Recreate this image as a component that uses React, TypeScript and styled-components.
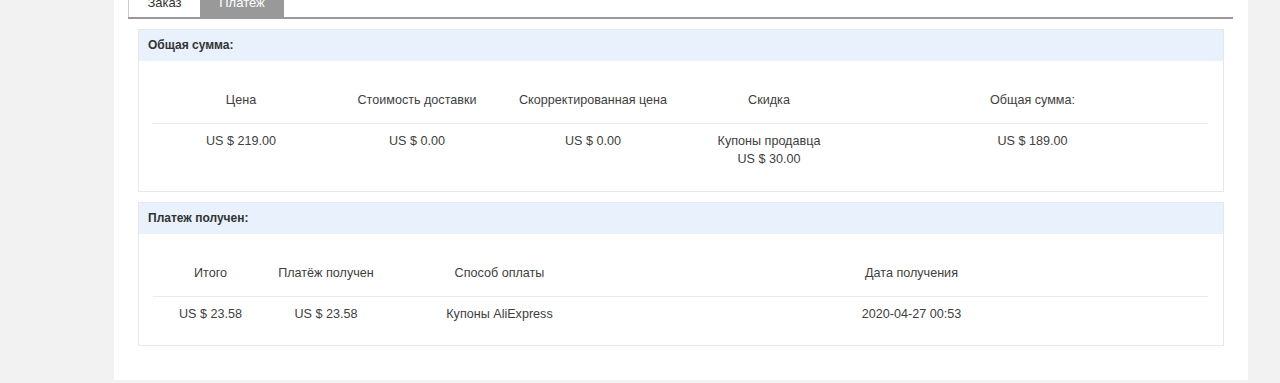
import React from "react";
import styled, { createGlobalStyle } from "styled-components";

const GlobalStyle = createGlobalStyle`
    html, body {
        margin: 0;
        padding: 0;
        background: #f2f2f2;
        font-family: "Liberation Sans", Arial, sans-serif;
        font-size: 12px;
        color: #333;
    }
`;

const Page = styled.div`
    padding-left: 114px;
    overflow: hidden;
    height: 383px;
`;

const Container = styled.div`
    width: 1134px;
    background: white;
    margin-top: -11px;
    padding: 0 15px 34px 14px;
    box-sizing: border-box;
`;

const TabBar = styled.div`
    display: flex;
    border-bottom: 2px solid #999;
`;

const Tab = styled.div<{ $active?: boolean }>`
    height: 28px;
    line-height: 28px;
    font-size: 13px;
    color: ${(p) => (p.$active ? "#fff" : "#333")};
    background: ${(p) => (p.$active ? "#999" : "#fff")};
    border-left: ${(p) => (p.$active ? "none" : "1px solid #ccc")};
    box-sizing: border-box;
    width: ${(p) => (p.$active ? "84px" : "72px")};
    text-align: center;
`;

const Content = styled.div`
    padding: 10px 9px 0 10px;
    display: flex;
    flex-direction: column;
    gap: 10px;
`;

const Section = styled.div`
    border: 1px solid #e4e8ee;
`;

const SectionHeader = styled.div`
    height: 31px;
    line-height: 31px;
    padding: 0 9px;
    background: #e8f1fc;
    font-weight: bold;
    font-size: 12px;
    color: #333;
`;

const SectionBody = styled.div<{ $bottom: number }>`
    padding: 30px 15px ${(p) => p.$bottom}px 14px;
`;

const Table = styled.table`
    width: 100%;
    border-collapse: collapse;
    table-layout: fixed;
    font-size: 12.6px;
`;

const Th = styled.th<{ $w?: number }>`
    width: ${(p) => (p.$w ? `${p.$w}px` : "auto")};
    font-weight: normal;
    text-align: center;
    line-height: 18px;
    padding: 0 0 14px;
    border-bottom: 1px solid #e6e9ed;
    color: #404040;
`;

const Td = styled.td`
    text-align: center;
    vertical-align: top;
    line-height: 18px;
    padding: 8px 0 0;
    color: #404040;
`;

const App: React.FC = () => {
    return (
        <>
            <GlobalStyle />
            <Page>
                <Container>
                    <TabBar>
                        <Tab>Заказ</Tab>
                        <Tab $active>Платеж</Tab>
                    </TabBar>
                    <Content>
                        <Section>
                            <SectionHeader>Общая сумма:</SectionHeader>
                            <SectionBody $bottom={23}>
                                <Table>
                                    <thead>
                                        <tr>
                                            <Th $w={176}>Цена</Th>
                                            <Th $w={176}>Стоимость доставки</Th>
                                            <Th $w={176}>Скорректированная цена</Th>
                                            <Th $w={176}>Скидка</Th>
                                            <Th>Общая сумма:</Th>
                                        </tr>
                                    </thead>
                                    <tbody>
                                        <tr>
                                            <Td>US $ 219.00</Td>
                                            <Td>US $ 0.00</Td>
                                            <Td>US $ 0.00</Td>
                                            <Td>
                                                Купоны продавца
                                                <br />
                                                US $ 30.00
                                            </Td>
                                            <Td>US $ 189.00</Td>
                                        </tr>
                                    </tbody>
                                </Table>
                            </SectionBody>
                        </Section>
                        <Section>
                            <SectionHeader>Платеж получен:</SectionHeader>
                            <SectionBody $bottom={22}>
                                <Table>
                                    <thead>
                                        <tr>
                                            <Th $w={115}>Итого</Th>
                                            <Th $w={116}>Платёж получен</Th>
                                            <Th $w={231}>Способ оплаты</Th>
                                            <Th>Дата получения</Th>
                                        </tr>
                                    </thead>
                                    <tbody>
                                        <tr>
                                            <Td>US $ 23.58</Td>
                                            <Td>US $ 23.58</Td>
                                            <Td>Купоны AliExpress</Td>
                                            <Td>2020-04-27 00:53</Td>
                                        </tr>
                                    </tbody>
                                </Table>
                            </SectionBody>
                        </Section>
                    </Content>
                </Container>
            </Page>
        </>
    );
};

export default App;
